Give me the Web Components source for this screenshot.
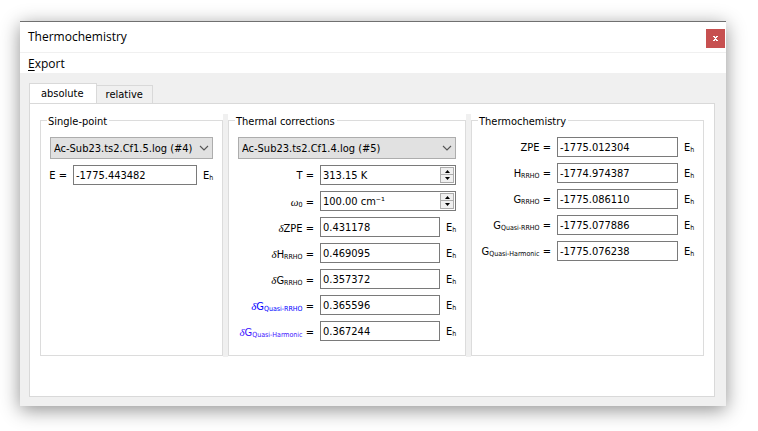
<!DOCTYPE html>
<html lang="en">
<head>
<meta charset="utf-8">
<title>Thermochemistry</title>
<style>
html{height:100%}
body{margin:0;min-height:100%;box-sizing:border-box;padding:21px 32px 25px 20px;background:#fff;display:flex;font:11px/14px "DejaVu Sans Condensed","Noto Sans",sans-serif;color:#000;overflow:hidden}
value-field a{color:#00f;text-decoration:none}
value-field a.seen{color:#4010ff}
value-field a sub{font-size:7px;line-height:0;vertical-align:-1px}
value-field a i{font-family:"Liberation Serif",serif}
</style>
</head>
<body>
<thermo-window heading="Thermochemistry">
  <menu-button slot="menu" key="E">xport</menu-button>
  <tab-pane tabs="absolute,relative">
    <split-groups>
      <group-box legend="Single-point" style="--label:17px">
        <combo-box value="Ac-Sub23.ts2.Cf1.5.log (#4)" name="Single-point file"></combo-box>
        <value-field value="-1775.443482" unit>E =</value-field>
      </group-box>
      <split-handle></split-handle>
      <group-box legend="Thermal corrections" style="--label:76px">
        <combo-box value="Ac-Sub23.ts2.Cf1.4.log (#5)" name="Thermal corrections file"></combo-box>
        <value-field value="313.15 K" spin>T =</value-field>
        <value-field value="100.00 cm⁻¹" spin><i>ω</i><sub>0</sub> =</value-field>
        <value-field value="0.431178" unit><i>δ</i>ZPE =</value-field>
        <value-field value="0.469095" unit><i>δ</i>H<sub>RRHO</sub> =</value-field>
        <value-field value="0.357372" unit><i>δ</i>G<sub>RRHO</sub> =</value-field>
        <value-field value="0.365596" unit><a href="#quasi-rrho"><i>δ</i>G<sub>Quasi-RRHO</sub></a> =</value-field>
        <value-field value="0.367244" unit><a href="#quasi-harmonic" class="seen"><i>δ</i>G<sub>Quasi-Harmonic</sub></a> =</value-field>
      </group-box>
      <split-handle></split-handle>
      <group-box legend="Thermochemistry" style="--label:70px">
        <value-field value="-1775.012304" unit>ZPE =</value-field>
        <value-field value="-1774.974387" unit>H<sub>RRHO</sub> =</value-field>
        <value-field value="-1775.086110" unit>G<sub>RRHO</sub> =</value-field>
        <value-field value="-1775.077886" unit>G<sub>Quasi-RRHO</sub> =</value-field>
        <value-field value="-1775.076238" unit>G<sub>Quasi-Harmonic</sub> =</value-field>
      </group-box>
    </split-groups>
  </tab-pane>
</thermo-window>
<script>
const define = (tag, render) => customElements.define(tag, class extends HTMLElement {
  constructor() {
    super();
    this.attachShadow({mode: 'open'}).innerHTML = render(this);
  }
});

define('thermo-window', el => `
<style>
:host{flex:1;min-width:0;display:flex;flex-direction:column;box-sizing:border-box;background:#f0f0f0;border-top:1px solid #707070;box-shadow:0 4px 18px rgba(0,0,0,.44)}
header{display:flex;align-items:center;justify-content:space-between;height:30px;padding:0 1px 0 8px;background:#fff;border-bottom:1px solid #f0f0f0}
h1{margin:0;font:12px/16px "Open Sans","Noto Sans",sans-serif}
button{width:19px;height:19px;padding:0;margin-top:3px;border:0;background:#c75050;display:grid;place-items:center}
nav{display:flex;align-items:center;height:20px;padding:0 8px;background:#fff;margin-bottom:10px}
main{flex:1;display:flex;padding:0 11px 9px 9px}
::slotted(tab-pane){flex:1;min-width:0}
</style>
<header><h1>${el.getAttribute('heading')}</h1>
<button type="button" aria-label="Close"><svg width="5" height="5" viewBox="0 0 5 5" shape-rendering="crispEdges"><path fill="#fff" d="M0 0h2v1h1V0h2v1H4v1H3v1h1v1h1v1H3V4H2v1H0V4h1V3h1V2H1V1H0z"/></svg></button></header>
<nav><slot name="menu"></slot></nav>
<main><slot></slot></main>`);

define('menu-button', el => `
<style>
:host{display:block}
button{padding:2px 0 0;border:0;background:none;font:12px/16px "Open Sans","Noto Sans",sans-serif;color:#000}
u{text-underline-offset:2px}
</style>
<button type="button"><u>${el.getAttribute('key')}</u><slot></slot></button>`);

define('tab-pane', el => `
<style>
:host{display:flex;flex-direction:column}
.tabs{display:flex;align-items:flex-end;height:20px}
button{box-sizing:border-box;height:18px;padding:1px 9px 0;border:1px solid #d9d9d9;border-width:1px 1px 0 0;background:#f0f0f0;font:inherit;color:#000}
button[aria-selected=true]{height:21px;margin-bottom:-1px;padding:0 12px 0 11px;border-left-width:1px;background:#fff}
.pane{flex:1;border:1px solid #d9d9d9;background:#fff;padding:10px}
</style>
<div class="tabs" role="tablist">${el.getAttribute('tabs').split(',').map((t, i) => `<button type="button" role="tab" aria-selected="${!i}">${t}</button>`).join('')}</div>
<div class="pane" role="tabpanel"><slot></slot></div>`);

define('split-groups', () => `
<style>
:host{display:grid;grid-template-columns:minmax(0,183fr) 5px minmax(0,238fr) 5px minmax(0,233fr)}
::slotted(group-box){margin-bottom:1px}
</style><slot></slot>`);

define('split-handle', () => `<style>:host{display:block;background:#f0f0f0;cursor:col-resize}</style>`);

define('group-box', el => `
<style>
:host{display:flex}
fieldset{flex:1;min-width:0;margin:0;padding:10px 9px 14px;border:1px solid #dcdcdc}
legend{margin-left:-3px;padding:2px 2px 0 1px;line-height:11px}
div{display:flex;flex-direction:column;gap:6px}
</style>
<fieldset><legend>${el.getAttribute('legend')}</legend><div><slot></slot></div></fieldset>`);

define('combo-box', el => `
<style>
:host{display:grid;grid-template-columns:minmax(0,1fr) 14px;align-items:center}
select{grid-area:1/1/2/3;width:100%;height:22px;box-sizing:border-box;appearance:none;margin:0;padding:2px 14px 0 3px;border:1px solid #adadad;border-radius:0;background:#e1e1e1;font:inherit;color:#000}
svg{grid-area:1/2;pointer-events:none}
</style>
<select aria-label="${el.getAttribute('name')}"><option>${el.getAttribute('value')}</option></select>
<svg width="10" height="6" viewBox="0 0 10 6"><path d="M1 1l4 4 4-4" fill="none" stroke="#555" stroke-width="1.1"/></svg>`);

define('value-field', el => `
<style>
:host{display:grid;grid-template-columns:var(--label) minmax(0,1fr);grid-auto-columns:10px;column-gap:6px;height:20px;align-items:center}
label{display:flex;justify-content:flex-end;white-space:nowrap}
label,.unit{padding-top:2px}
sub,::slotted(sub){font-size:7px;line-height:0;vertical-align:-1px}
::slotted(i){font-family:"Liberation Serif",serif}
.box{display:flex;box-sizing:border-box;height:20px;border:1px solid #7a7a7a;background:#fff;padding:1px}
input{flex:1;min-width:0;margin:0;padding:2px 0 0 1px;border:0;outline:0;background:none;font:inherit;color:#000}
.spin{display:grid;width:14px;grid-template-rows:1fr 1fr}
button{display:grid;place-items:center;padding:0;box-sizing:border-box;border:1px solid #acacac;background:#f0f0f0;min-height:0}
button+button{border-top:0}
.unit{white-space:nowrap;grid-column:3}
</style>
<label for="v"><span><slot></slot></span></label>
<div class="box"><input id="v" type="text" value="${el.getAttribute('value')}">${el.hasAttribute('spin') ? `
<div class="spin"><button type="button" aria-label="Increase"><svg width="5" height="3" viewBox="0 0 5 3"><path d="M0 3l2.500-3L5 3z"/></svg></button><button type="button" aria-label="Decrease"><svg width="5" height="3" viewBox="0 0 5 3"><path d="M0 0l2.500 3L5 0z"/></svg></button></div>` : ''}</div>
${el.hasAttribute('unit') ? '<span class="unit">E<sub>h</sub></span>' : ''}`);
</script>
</body>
</html>
